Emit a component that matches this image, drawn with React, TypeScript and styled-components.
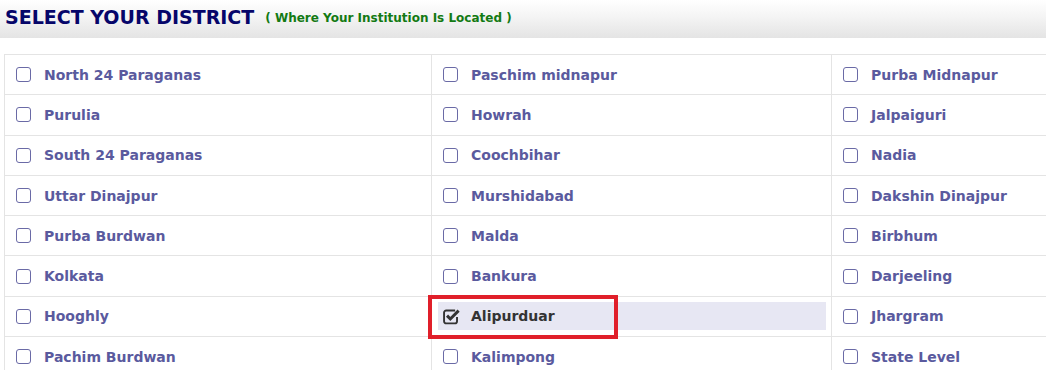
import React from "react"
import styled, { createGlobalStyle } from "styled-components"

const GlobalStyle = createGlobalStyle`
  html, body {
    margin: 0;
    padding: 0;
    background: #fff;
    overflow: hidden;
  }
  body {
    font-family: "DejaVu Sans", Verdana, sans-serif;
  }
`

const Page = styled.div`
  width: 1046px;
  height: 370px;
  overflow: hidden;
`

const Header = styled.div`
  height: 38px;
  display: flex;
  align-items: center;
  gap: 11px;
  padding: 0 0 4px 5px;
  box-sizing: border-box;
  background: linear-gradient(to bottom, #ffffff 0%, #f4f4f4 45%, #e4e4e4 100%);
`

const Title = styled.h2`
  margin: 0;
  font-size: 19px;
  font-weight: bold;
  color: #06066a;
`

const Hint = styled.span`
  font-size: 12px;
  font-weight: bold;
  color: #137a13;
  padding-top: 2px;
`

const Grid = styled.div`
  position: relative;
  display: grid;
  grid-template-columns: 427px 400px 420px;
  grid-auto-rows: 40.3px;
  margin: 16px 0 0 4px;
  border-top: 1px solid #e4e4e4;
  border-left: 1px solid #e4e4e4;
`

const Cell = styled.div`
  border-right: 1px solid #e4e4e4;
  border-bottom: 1px solid #e4e4e4;
  display: flex;
  align-items: center;
  padding: 0 5px 0 6px;
`

const Option = styled.label<{ $active?: boolean }>`
  flex: 1;
  height: 28px;
  display: flex;
  align-items: center;
  gap: 13px;
  padding: 0 0 0 5px;
  background: ${p => (p.$active ? "#e7e7f3" : "transparent")};
  color: ${p => (p.$active ? "#333333" : "#5a5a9e")};
  font-size: 14px;
  font-weight: bold;
  cursor: pointer;
`

const Box = styled.span`
  width: 15px;
  height: 15px;
  box-sizing: border-box;
  border: 1.6px solid #6a6aa6;
  border-radius: 3px;
  flex-shrink: 0;
`

const Mark = styled.svg`
  width: 17px;
  height: 17px;
  margin-right: -2px;
  flex-shrink: 0;
  display: block;
`

const Callout = styled.div`
  position: absolute;
  left: 423px;
  top: 240px;
  width: 190px;
  height: 44px;
  box-sizing: border-box;
  border: 4.5px solid #e01f2a;
  pointer-events: none;
`

const rows: string[][] = [
  ["North 24 Paraganas", "Paschim midnapur", "Purba Midnapur"],
  ["Purulia", "Howrah", "Jalpaiguri"],
  ["South 24 Paraganas", "Coochbihar", "Nadia"],
  ["Uttar Dinajpur", "Murshidabad", "Dakshin Dinajpur"],
  ["Purba Burdwan", "Malda", "Birbhum"],
  ["Kolkata", "Bankura", "Darjeeling"],
  ["Hooghly", "Alipurduar", "Jhargram"],
  ["Pachim Burdwan", "Kalimpong", "State Level"],
]

const CheckedIcon = () => (
  <Mark viewBox="0 0 16 16">
    <path
      d="M13.2 8.4v4.1a2 2 0 0 1-2 2H3a2 2 0 0 1-2-2V4.3a2 2 0 0 1 2-2h8.4"
      fill="none"
      stroke="#333"
      strokeWidth="1.8"
    />
    <path
      d="M3.8 7.2l3.1 3.1 7.8-7.8"
      fill="none"
      stroke="#333"
      strokeWidth="2.8"
    />
  </Mark>
)

const App = () => {
  const selected = "Alipurduar"
  return (
    <Page>
      <GlobalStyle />
      <Header>
        <Title>SELECT YOUR DISTRICT</Title>
        <Hint>( Where Your Institution Is Located )</Hint>
      </Header>
      <Grid>
        {rows.flat().map(name => (
          <Cell key={name}>
            <Option $active={name === selected}>
              {name === selected ? <CheckedIcon /> : <Box />}
              {name}
            </Option>
          </Cell>
        ))}
        <Callout />
      </Grid>
    </Page>
  )
}

export default App
